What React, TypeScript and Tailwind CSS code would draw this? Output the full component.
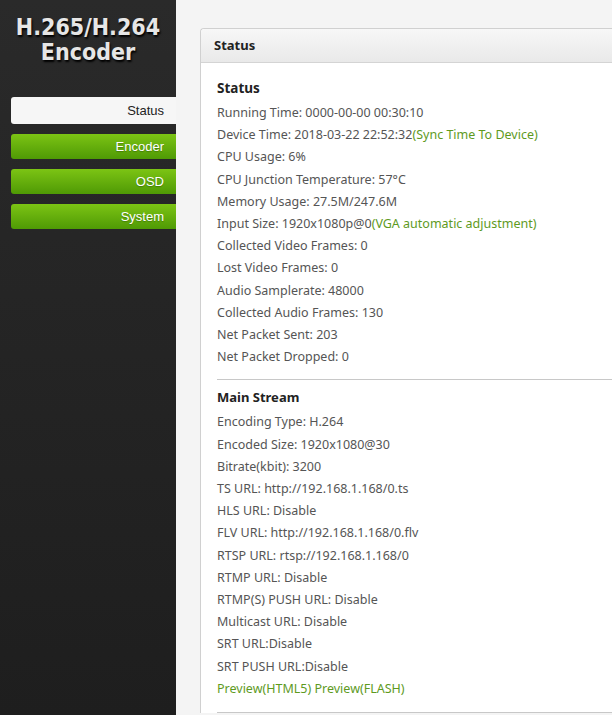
import React from 'react';

const statusRows: React.ReactNode[] = [
  'Running Time: 0000-00-00 00:30:10',
  <>Device Time: 2018-03-22 22:52:32<span className="text-[#5e9a1e]">(Sync Time To Device)</span></>,
  'CPU Usage: 6%',
  'CPU Junction Temperature: 57°C',
  'Memory Usage: 27.5M/247.6M',
  <>Input Size: 1920x1080p@0<span className="text-[#5e9a1e]">(VGA automatic adjustment)</span></>,
  'Collected Video Frames: 0',
  'Lost Video Frames: 0',
  'Audio Samplerate: 48000',
  'Collected Audio Frames: 130',
  'Net Packet Sent: 203',
  'Net Packet Dropped: 0',
];

const streamRows: React.ReactNode[] = [
  'Encoding Type: H.264',
  'Encoded Size: 1920x1080@30',
  'Bitrate(kbit): 3200',
  'TS URL: http://192.168.1.168/0.ts',
  'HLS URL: Disable',
  'FLV URL: http://192.168.1.168/0.flv',
  'RTSP URL: rtsp://192.168.1.168/0',
  'RTMP URL: Disable',
  'RTMP(S) PUSH URL: Disable',
  'Multicast URL: Disable',
  'SRT URL:Disable',
  'SRT PUSH URL:Disable',
  <span className="text-[#5e9a1e]">Preview(HTML5) Preview(FLASH)</span>,
];

const menu = ['Status', 'Encoder', 'OSD', 'System'];

const App: React.FC = () => {
  return (
    <div className="flex w-[612px] h-[715px] overflow-hidden bg-[#f4f4f4]" style={{ fontFamily: '"Noto Sans", sans-serif' }}>
      <aside className="w-[176px] shrink-0 bg-[#262626] bg-gradient-to-b from-[#2a2a2a] to-[#1e1e1e]">
        <h1
          className="pt-[15px] text-center text-[23px] leading-[25px] font-bold text-[#e6e6e6] [text-shadow:1px_2px_2px_#000]"
          style={{ fontFamily: '"DejaVu Sans Condensed", "DejaVu Sans", sans-serif' }}
        >
          H.265/H.264
          <br />
          Encoder
        </h1>
        <nav className="mt-[32px] flex flex-col gap-[10px] pl-[11px]" style={{ fontFamily: '"Liberation Sans", Arial, sans-serif' }}>
          {menu.map((m, i) =>
            i === 0 ? (
              <div key={m} className="h-[27px] rounded-l-[3px] bg-[#f6f6f6] pr-[12px] text-right text-[13px] leading-[27px] text-[#222]">
                {m}
              </div>
            ) : (
              <div
                key={m}
                className="h-[25px] rounded-l-[3px] bg-gradient-to-b from-[#7cc414] to-[#4f9a05] pr-[12px] text-right text-[13px] leading-[25px] text-white [text-shadow:0_1px_1px_rgba(0,0,0,0.25)]"
              >
                {m}
              </div>
            )
          )}
        </nav>
      </aside>
      <main className="flex-1 pl-[24px] pt-[28px]">
        <section className="w-[420px] rounded-tl-[4px] border-l border-t border-[#d0d0d0] bg-white">
          <header className="h-[34px] rounded-tl-[4px] border-b border-[#d4d4d4] bg-gradient-to-b from-[#f7f7f7] to-[#e9e9e9] pl-[13px] text-[13px] font-bold leading-[33px] text-[#222]">
            Status
          </header>
          <div className="pl-[16px] pt-[13px] text-[12.5px] text-[#555]">
            <h2 className="mb-[2px] text-[13.5px] font-bold leading-[24px] text-[#222]">Status</h2>
            {statusRows.map((r, i) => (
              <div key={i} className="leading-[22.2px]">{r}</div>
            ))}
            <div className="mt-[11px] border-t border-[#c8c8c8]" />
            <h2 className="mt-[5px] mb-[2px] text-[13px] font-bold leading-[24px] text-[#222]">Main Stream</h2>
            {streamRows.map((r, i) => (
              <div key={i} className="leading-[22.2px]">{r}</div>
            ))}
            <div className="mt-[12px] border-t border-[#c8c8c8]" />
          </div>
        </section>
      </main>
    </div>
  );
};

export default App;
